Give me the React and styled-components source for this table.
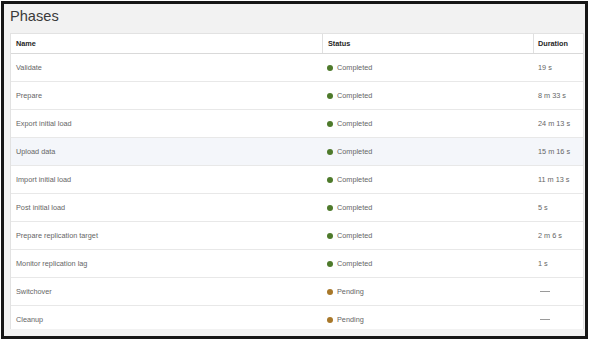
import React from 'react';
import styled, { createGlobalStyle } from 'styled-components';

const GlobalStyle = createGlobalStyle`
  body {
    margin: 0;
    background: #ffffff;
    font-family: "Liberation Sans", Arial, sans-serif;
  }
`;

const Frame = styled.div`
  box-sizing: border-box;
  margin: 1px 0 0 1px;
  width: 587px;
  height: 338px;
  border: 3px solid #161616;
  background: #f2f2f2;
  padding: 0 1px 7px 6px;
  display: flex;
  flex-direction: column;
`;

const Title = styled.h1`
  margin: 0;
  height: 29px;
  line-height: 24px;
  font-size: 14.6px;
  font-weight: normal;
  color: #3a3a3a;
`;

const Panel = styled.div`
  flex: 1;
  overflow: hidden;
  background: #ffffff;
  border: 1px solid #e2e2e2;
  border-bottom: none;
`;

const Row = styled.div`
  display: grid;
  grid-template-columns: 311px 211px 1fr;
  height: ${p => (p.$head ? '19px' : '27px')};
  border-bottom: 1px solid ${p => (p.$head ? '#d9d9d9' : '#e8e8e8')};
  background: ${p => (p.$hover ? '#f4f6fa' : '#ffffff')};
`;

const Cell = styled.div`
  display: flex;
  align-items: center;
  padding-left: ${p => (p.$pad ? p.$pad : 5)}px;
  font-size: 7.3px;
  color: ${p => (p.$head ? '#262626' : '#666666')};
  font-weight: ${p => (p.$head ? 'bold' : 'normal')};
  border-left: ${p => (p.$divider ? '1px solid #e0e0e0' : 'none')};
  white-space: nowrap;
`;

const Dot = styled.span`
  width: 6px;
  height: 6px;
  border-radius: 50%;
  background: ${p => (p.$state === 'Pending' ? '#a8782a' : '#4e7a2b')};
  margin-right: 4px;
`;

const Dash = styled.span`
  display: inline-block;
  width: 10px;
  height: 1px;
  margin-left: 2px;
  background: #9a9a9a;
`;

const phases = [
  { name: 'Validate', status: 'Completed', duration: '19 s' },
  { name: 'Prepare', status: 'Completed', duration: '8 m 33 s' },
  { name: 'Export initial load', status: 'Completed', duration: '24 m 13 s' },
  { name: 'Upload data', status: 'Completed', duration: '15 m 16 s', hover: true },
  { name: 'Import initial load', status: 'Completed', duration: '11 m 13 s' },
  { name: 'Post initial load', status: 'Completed', duration: '5 s' },
  { name: 'Prepare replication target', status: 'Completed', duration: '2 m 6 s' },
  { name: 'Monitor replication lag', status: 'Completed', duration: '1 s' },
  { name: 'Switchover', status: 'Pending', duration: null },
  { name: 'Cleanup', status: 'Pending', duration: null },
];

export default function App() {
  return (
    <>
      <GlobalStyle />
      <Frame>
        <Title>Phases</Title>
        <Panel>
          <Row $head>
            <Cell $head>Name</Cell>
            <Cell $head $divider>Status</Cell>
            <Cell $head $divider $pad={4}>Duration</Cell>
          </Row>
          {phases.map(p => (
            <Row key={p.name} $hover={p.hover}>
              <Cell>{p.name}</Cell>
              <Cell $pad={5}>
                <Dot $state={p.status} />
                {p.status}
              </Cell>
              <Cell $pad={5}>{p.duration ? p.duration : <Dash />}</Cell>
            </Row>
          ))}
        </Panel>
      </Frame>
    </>
  );
}
